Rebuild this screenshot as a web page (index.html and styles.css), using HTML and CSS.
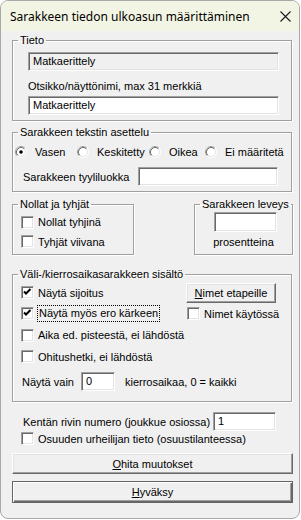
FILE: index.html
```html
<!DOCTYPE html>
<html lang="fi">
<head>
    <meta charset="UTF-8">
    <meta name="viewport" content="width=device-width, initial-scale=1.0">
    <title>Sarakkeen tiedon ulkoasun määrittäminen</title>
    <link rel="stylesheet" href="styles.css">
</head>
<body>
    <div class="window">
        <div class="titlebar">
            <span class="title">Sarakkeen tiedon ulkoasun määrittäminen</span>
            <svg class="close" width="11" height="11" viewBox="0 0 11 11">
                <path d="M0.5 0.5L10.5 10.5M10.5 0.5L0.5 10.5" stroke="#1a1a1a" stroke-width="1.1" fill="none"/>
            </svg>
        </div>

        <div class="content">
            <!-- Tieto -->
            <fieldset class="group group-info">
                <legend>Tieto</legend>
                <div class="field readonly info-field">Matkaerittely</div>
                <div class="info-label">Otsikko/näyttönimi, max 31 merkkiä</div>
                <div class="field info-field input-gap">Matkaerittely</div>
            </fieldset>

            <!-- Tekstin asettelu -->
            <fieldset class="group group-align">
                <legend>Sarakkeen tekstin asettelu</legend>
                <div class="radios">
                    <label class="radio w-vasen">
                        <svg width="12" height="12" viewBox="0 0 12 12">
                            <circle cx="6" cy="6" r="5" fill="#fff"/>
                            <path d="M9.89 2.11A5.5 5.5 0 0 1 2.11 9.89" stroke="#fff" fill="none"/>
                            <path d="M2.11 9.89A5.5 5.5 0 0 1 9.89 2.11" stroke="#a0a0a0" fill="none"/>
                            <path d="M9.18 2.82A4.5 4.5 0 0 1 2.82 9.18" stroke="#e3e3e3" fill="none"/>
                            <path d="M2.82 9.18A4.5 4.5 0 0 1 9.18 2.82" stroke="#696969" fill="none"/>
                            <circle cx="6" cy="6" r="1.8" fill="#000"/>
                        </svg>
                        Vasen
                    </label>
                    <label class="radio w-keski">
                        <svg width="12" height="12" viewBox="0 0 12 12">
                            <circle cx="6" cy="6" r="5" fill="#fff"/>
                            <path d="M9.89 2.11A5.5 5.5 0 0 1 2.11 9.89" stroke="#fff" fill="none"/>
                            <path d="M2.11 9.89A5.5 5.5 0 0 1 9.89 2.11" stroke="#a0a0a0" fill="none"/>
                            <path d="M9.18 2.82A4.5 4.5 0 0 1 2.82 9.18" stroke="#e3e3e3" fill="none"/>
                            <path d="M2.82 9.18A4.5 4.5 0 0 1 9.18 2.82" stroke="#696969" fill="none"/>
                        </svg>
                        Keskitetty
                    </label>
                    <label class="radio w-oikea">
                        <svg width="12" height="12" viewBox="0 0 12 12">
                            <circle cx="6" cy="6" r="5" fill="#fff"/>
                            <path d="M9.89 2.11A5.5 5.5 0 0 1 2.11 9.89" stroke="#fff" fill="none"/>
                            <path d="M2.11 9.89A5.5 5.5 0 0 1 9.89 2.11" stroke="#a0a0a0" fill="none"/>
                            <path d="M9.18 2.82A4.5 4.5 0 0 1 2.82 9.18" stroke="#e3e3e3" fill="none"/>
                            <path d="M2.82 9.18A4.5 4.5 0 0 1 9.18 2.82" stroke="#696969" fill="none"/>
                        </svg>
                        Oikea
                    </label>
                    <label class="radio">
                        <svg width="12" height="12" viewBox="0 0 12 12">
                            <circle cx="6" cy="6" r="5" fill="#fff"/>
                            <path d="M9.89 2.11A5.5 5.5 0 0 1 2.11 9.89" stroke="#fff" fill="none"/>
                            <path d="M2.11 9.89A5.5 5.5 0 0 1 9.89 2.11" stroke="#a0a0a0" fill="none"/>
                            <path d="M9.18 2.82A4.5 4.5 0 0 1 2.82 9.18" stroke="#e3e3e3" fill="none"/>
                            <path d="M2.82 9.18A4.5 4.5 0 0 1 9.18 2.82" stroke="#696969" fill="none"/>
                        </svg>
                        Ei määritetä
                    </label>
                </div>
                <div class="style-row">
                    <span class="style-label">Sarakkeen tyyliluokka</span>
                    <div class="field style-field"></div>
                </div>
            </fieldset>

            <!-- Nollat + leveys -->
            <div class="pair">
                <fieldset class="group group-zero">
                    <legend>Nollat ja tyhjät</legend>
                    <label class="check zero-row1"><span class="cb"></span>Nollat tyhjinä</label>
                    <label class="check zero-row2"><span class="cb"></span>Tyhjät viivana</label>
                </fieldset>
                <fieldset class="group group-width">
                    <legend>Sarakkeen leveys</legend>
                    <div class="field width-field"></div>
                    <div class="width-label">prosentteina</div>
                </fieldset>
            </div>

            <!-- Väliajat -->
            <fieldset class="group group-split">
                <legend>Väli-/kierrosaikasarakkeen sisältö</legend>
                <div class="split-grid">
                    <label class="check split-row r1">
                        <span class="cb"><svg width="11" height="11" viewBox="0 0 11 11"><path d="M2 4.5L4 6.5L8.5 2" stroke="#000" stroke-width="2" fill="none"/></svg></span>Näytä sijoitus
                    </label>
                    <div class="split-row r1">
                        <button class="btn names-btn"><u>N</u>imet etapeille</button>
                    </div>
                    <label class="check split-row r2">
                        <span class="cb"><svg width="11" height="11" viewBox="0 0 11 11"><path d="M2 4.5L4 6.5L8.5 2" stroke="#000" stroke-width="2" fill="none"/></svg></span><span class="focus">Näytä myös ero kärkeen</span>
                    </label>
                    <label class="check split-row r2 names-check"><span class="cb"></span>Nimet käytössä</label>
                    <label class="check split-row r3 full"><span class="cb"></span>Aika ed. pisteestä, ei lähdöstä</label>
                    <label class="check split-row r4 full"><span class="cb"></span>Ohitushetki, ei lähdöstä</label>
                </div>
                <div class="laps-row">
                    <span>Näytä vain</span>
                    <div class="field laps-field">0</div>
                    <span>kierrosaikaa, 0 = kaikki</span>
                </div>
            </fieldset>

            <div class="row-number">
                <span>Kentän rivin numero (joukkue osiossa)</span>
                <div class="field number-field">1</div>
            </div>
            <label class="check leg-check"><span class="cb"></span>Osuuden urheilijan tieto (osuustilanteessa)</label>

            <button class="btn wide cancel-btn"><u>O</u>hita muutokset</button>
            <button class="btn wide default ok-btn"><u>H</u>yväksy</button>
        </div>
    </div>
</body>
</html>
```

FILE: styles.css
```css
body {
    margin: 0;
    background-color: #ffffff;
    font-family: "Liberation Sans", Arial, sans-serif;
    font-size: 11px;
    color: #000;
}
.window {
    width: 300px;
    height: 519px;
    box-sizing: border-box;
    border: 1px solid #a9a9a9;
    border-radius: 8px;
    overflow: hidden;
    background-color: #f0f0f0;
}
.titlebar {
    height: 30px;
    display: flex;
    align-items: center;
    padding-left: 9px;
    background-color: #f3f5e4;
}
.title {
    font-family: "Noto Sans", "Liberation Sans", sans-serif;
    font-size: 12px;
}
.close {
    margin-left: auto;
    margin-right: 8px;
}
.content {
    padding-left: 11px;
}

/* group boxes */
.group {
    margin: 0;
    padding: 0;
    width: 280px;
    box-sizing: border-box;
    border: 1px solid #a0a0a0;
    box-shadow: 1px 1px 0 #fff, inset 1px 1px 0 #fff;
    min-width: 0;
}
.group legend {
    margin-left: 5px;
    padding: 0 2px;
    line-height: 13px;
}

/* text boxes */
.field {
    box-sizing: border-box;
    height: 19px;
    line-height: 15px;
    padding-left: 3px;
    background-color: #fff;
    border: 1px solid;
    border-color: #a0a0a0 #fff #fff #a0a0a0;
    box-shadow: inset 1px 1px 0 #696969, inset -1px -1px 0 #e3e3e3;
    padding-top: 1px;
    padding-left: 4px;
}
.field.readonly {
    background-color: #f0f0f0;
}

.group-info {
    margin-top: 3px;
    padding-bottom: 5px;
}
.info-field {
    width: 251px;
    margin-left: 15px;
    margin-top: 5px;
}
.info-field.input-gap {
    margin-top: 3px;
}
.info-label {
    margin: 9px 0 0 15px;
    line-height: 13px;
}

.group-align {
    margin-top: 5px;
    padding-bottom: 5px;
}
.radios {
    display: flex;
    height: 16px;
    margin-top: 5px;
    padding-left: 2px;
}
.radio {
    display: flex;
    align-items: center;
}
.radio svg {
    margin-right: 8px;
}
.w-vasen { width: 62px; }
.w-keski { width: 72px; }
.w-oikea { width: 56px; }
.style-row {
    display: flex;
    align-items: center;
    margin-top: 7px;
}
.style-label {
    margin-left: 10px;
    width: 115px;
}
.style-field {
    width: 140px;
}

/* checkboxes */
.check {
    display: flex;
    align-items: center;
    white-space: nowrap;
}
.cb {
    width: 13px;
    height: 13px;
    box-sizing: border-box;
    flex-shrink: 0;
    margin-right: 4px;
    background-color: #fff;
    border: 1px solid;
    border-color: #a0a0a0 #fff #fff #a0a0a0;
    box-shadow: inset 1px 1px 0 #696969, inset -1px -1px 0 #e3e3e3;
    display: flex;
    align-items: center;
    justify-content: center;
}

.pair {
    display: flex;
    justify-content: space-between;
    width: 281px;
    margin-top: 6px;
}
.group-zero {
    width: 122px;
    padding-bottom: 3px;
}
.zero-row1 {
    height: 20px;
    margin-top: 1px;
    padding-left: 8px;
}
.zero-row2 {
    height: 19px;
    padding-left: 8px;
}
.group-width {
    width: 99px;
}
.width-field {
    width: 63px;
    height: 20px;
    margin: 1px 0 0 19px;
}
.width-label {
    text-align: center;
    margin-top: 4px;
    line-height: 13px;
}

.group-split {
    margin-top: 13px;
    padding-bottom: 10px;
}
.split-grid {
    display: grid;
    grid-template-columns: 165px 100px;
    padding-left: 8px;
    margin-top: 1px;
}
.split-row {
    display: flex;
    align-items: center;
}
.r1 { height: 21px; }
.r2 { height: 21px; }
.r3 { height: 22px; }
.r4 { height: 21px; }
.full {
    grid-column: 1 / 3;
}
.focus {
    border: 1px dotted #000;
    padding: 1px 1px 2px 1px;
    margin-left: -1px;
}
.names-check {
    padding-left: 1px;
}
.laps-row {
    display: flex;
    align-items: center;
    margin-top: 5px;
    padding-left: 9px;
}
.laps-field {
    width: 34px;
    margin: 0 10px 0 7px;
}

.row-number {
    display: flex;
    align-items: center;
    margin-top: 10px;
    padding-left: 11px;
}
.row-number span {
    width: 190px;
}
.number-field {
    width: 63px;
}
.leg-check {
    height: 15px;
    padding-left: 9px;
}

/* buttons */
.btn {
    display: block;
    box-sizing: border-box;
    font-family: inherit;
    font-size: 11px;
    color: #000;
    padding: 0;
    background-color: #f0f0f0;
    border: 1px solid;
    border-color: #fff #696969 #696969 #fff;
    box-shadow: inset -1px -1px 0 #a0a0a0, inset 1px 1px 0 #e3e3e3;
}
.names-btn {
    width: 90px;
    height: 20px;
}
.wide {
    width: 281px;
}
.cancel-btn {
    height: 21px;
    margin-top: 7px;
}
.ok-btn {
    height: 22px;
    margin-top: 7px;
}
.btn.default {
    border: 1px solid #646464;
    box-shadow: inset 1px 1px 0 #fff, inset -1px -1px 0 #696969, inset -2px -2px 0 #a0a0a0;
}
```
